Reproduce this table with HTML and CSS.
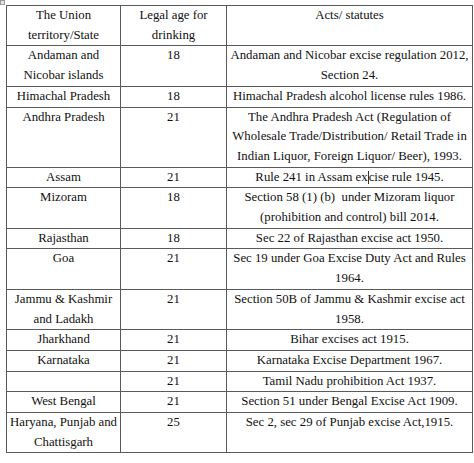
FILE: index.html
```html
<!DOCTYPE html>
<html>
<head>
<meta charset="utf-8">
<link rel="stylesheet" href="styles.css">
</head>
<body>
<span class="handle"></span>
<table class="laws">
  <colgroup>
    <col class="c1"><col class="c2"><col class="c3">
  </colgroup>
  <tr><td>The Union<br>territory/State</td><td>Legal age for<br>drinking</td><td>Acts/ statutes</td></tr>
  <tr><td>Andaman and<br>Nicobar islands</td><td>18</td><td>Andaman and Nicobar excise regulation 2012,<br>Section 24.</td></tr>
  <tr><td>Himachal Pradesh</td><td>18</td><td>Himachal Pradesh alcohol license rules 1986.</td></tr>
  <tr><td>Andhra Pradesh</td><td>21</td><td>The Andhra Pradesh Act (Regulation of<br>Wholesale Trade/Distribution/ Retail Trade in<br>Indian Liquor, Foreign Liquor/ Beer), 1993.</td></tr>
  <tr><td>Assam</td><td>21</td><td>Rule 241 in Assam ex<span class="caret"></span>cise rule 1945.</td></tr>
  <tr><td>Mizoram</td><td>18</td><td>Section 58 (1) (b) &nbsp;under Mizoram liquor<br>(prohibition and control) bill 2014.</td></tr>
  <tr><td>Rajasthan</td><td>18</td><td>Sec 22 of Rajasthan excise act 1950.</td></tr>
  <tr><td>Goa</td><td>21</td><td>Sec 19 under Goa Excise Duty Act and Rules<br>1964.</td></tr>
  <tr><td>Jammu &amp; Kashmir<br>and Ladakh</td><td>21</td><td>Section 50B of Jammu &amp; Kashmir excise act<br>1958.</td></tr>
  <tr><td>Jharkhand</td><td>21</td><td>Bihar excises act 1915.</td></tr>
  <tr><td>Karnataka</td><td>21</td><td>Karnataka Excise Department 1967.</td></tr>
  <tr><td></td><td>21</td><td>Tamil Nadu prohibition Act 1937.</td></tr>
  <tr><td>West Bengal</td><td>21</td><td>Section 51 under Bengal Excise Act 1909.</td></tr>
  <tr><td>Haryana, Punjab and<br>Chattisgarh</td><td>25</td><td>Sec 2, sec 29 of Punjab excise Act,1915.</td></tr>
</table>
</body>
</html>
```
FILE: styles.css
```css
html, body {
  margin: 0;
  padding: 0;
  background: #ffffff;
}
body {
  position: relative;
  padding: 5px 0 0 6px;
  font-family: "Liberation Serif", "DejaVu Serif", "Times New Roman", serif;
  color: #111111;
}
.handle {
  position: absolute;
  left: 0;
  top: 0;
  width: 3px;
  height: 3px;
  border: 1px solid #9a9a9a;
  background: #e4e4e4;
}
.laws {
  border-collapse: collapse;
  table-layout: fixed;
  width: 466px;
  font-family: "Liberation Serif", "DejaVu Serif", "Times New Roman", serif;
  font-size: 12.8px;
  line-height: 19.7px;
}
.c1 { width: 114px; }
.c2 { width: 106px; }
.c3 { width: 246px; }
.laws td {
  border: 1px solid #5a5a5a;
  padding: 0 1px;
  text-align: center;
  vertical-align: top;
  white-space: nowrap;
  overflow: hidden;
}
.caret {
  display: inline-block;
  width: 0;
  height: 13px;
  border-left: 1px solid #333;
  vertical-align: -3px;
}
```
